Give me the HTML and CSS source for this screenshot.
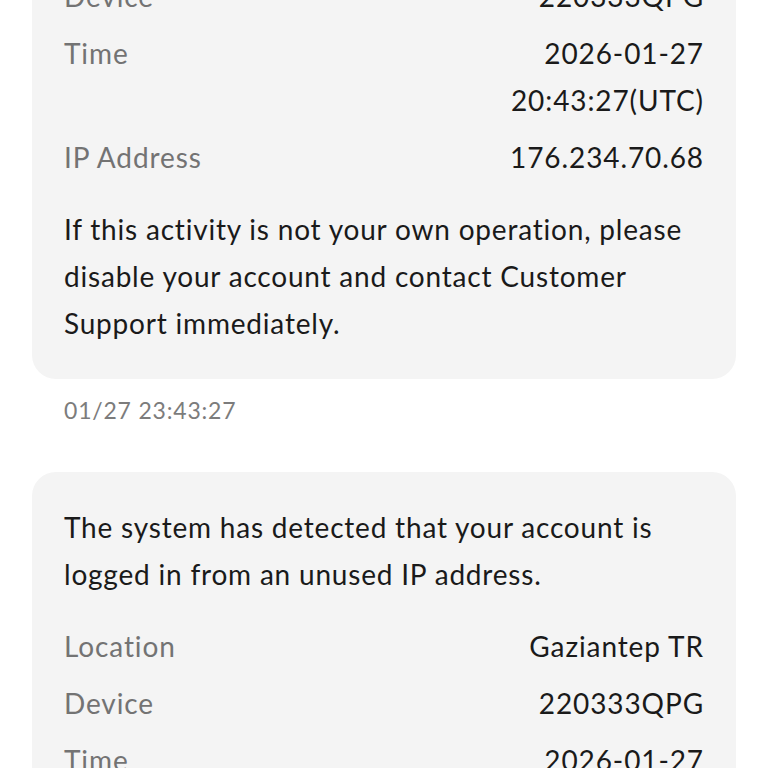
FILE: index.html
```html
<!DOCTYPE html>
<html lang="en">
<head>
<meta charset="utf-8">
<title>Notifications</title>
<link rel="stylesheet" href="styles.css">
</head>
<body>
<main class="feed">
  <section class="card">
    <p class="msg">The system has detected that your account is logged in from an unused IP address.</p>
    <div class="rows">
      <div class="row"><span class="label">Location</span><span class="value">Gaziantep TR</span></div>
      <div class="row"><span class="label">Device</span><span class="value">220333QPG</span></div>
      <div class="row"><span class="label">Time</span><span class="value">2026-01-27 20:43:27(UTC)</span></div>
      <div class="row"><span class="label">IP Address</span><span class="value">176.234.70.68</span></div>
    </div>
    <p class="msg">If this activity is not your own operation, please disable your account and contact Customer Support immediately.</p>
  </section>
  <div class="stamp">01/27 23:43:27</div>

  <section class="card">
    <p class="msg">The system has detected that your account is logged in from an unused IP address.</p>
    <div class="rows">
      <div class="row"><span class="label">Location</span><span class="value">Gaziantep TR</span></div>
      <div class="row"><span class="label">Device</span><span class="value">220333QPG</span></div>
      <div class="row"><span class="label">Time</span><span class="value">2026-01-27 20:43:27(UTC)</span></div>
      <div class="row"><span class="label">IP Address</span><span class="value">176.234.70.68</span></div>
    </div>
    <p class="msg">If this activity is not your own operation, please disable your account and contact Customer Support immediately.</p>
  </section>
  <div class="stamp">01/27 23:43:27</div>
</main>
</body>
</html>
```
FILE: styles.css
```css
html, body {
  margin: 0;
  padding: 0;
  background: #ffffff;
}

body {
  font-family: "Lato", "Noto Sans", sans-serif;
  color: #1a1a1a;
  overflow: hidden;
}

.feed {
  display: flex;
  flex-direction: column;
  padding: 0 32px;
  margin-top: -235px;
}

.card {
  background: #f4f4f4;
  border-radius: 24px;
  padding: 32px;
  display: flex;
  flex-direction: column;
  gap: 25px;
}

.msg {
  margin: 0;
  font-size: 28px;
  line-height: 47px;
  letter-spacing: 0.8px;
  color: #1a1a1a;
}

.rows {
  display: flex;
  flex-direction: column;
  gap: 10px;
}

.row {
  display: flex;
  justify-content: space-between;
  align-items: flex-start;
  font-size: 28px;
  line-height: 47px;
  letter-spacing: 0.9px;
}

.label {
  color: #737373;
}

.value {
  color: #1a1a1a;
  text-align: right;
  max-width: 50%;
}

.stamp {
  font-size: 23px;
  line-height: 36px;
  letter-spacing: 0.8px;
  color: #7c7c7c;
  margin: 13px 0 44px;
  padding-left: 32px;
}
```
